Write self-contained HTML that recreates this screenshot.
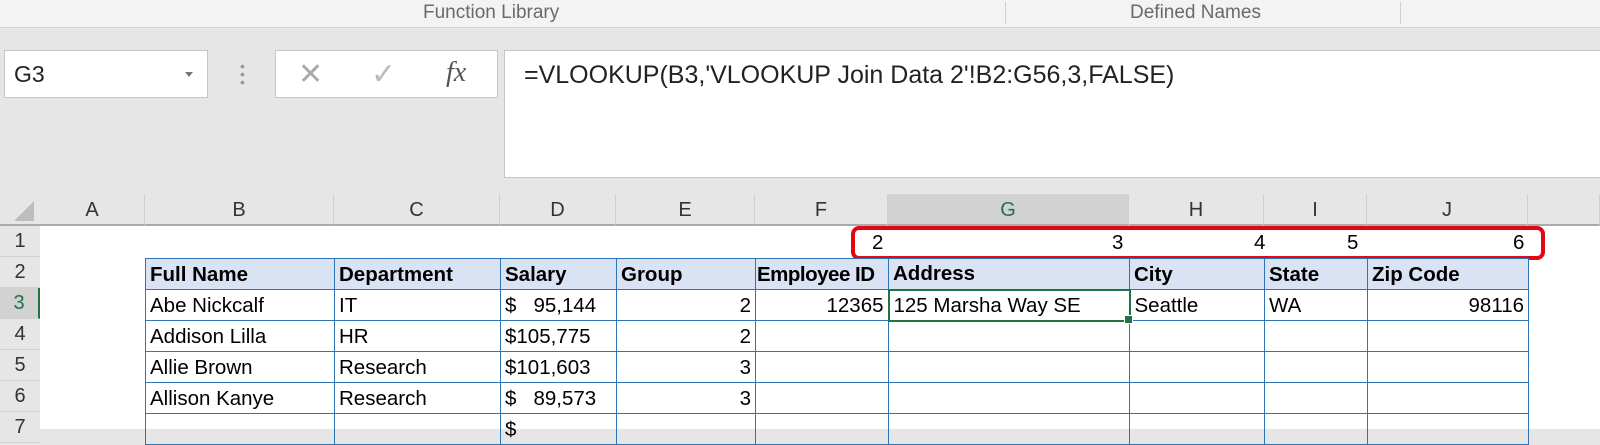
<!DOCTYPE html>
<html><head><style>
body{margin:0;width:1600px;height:429px;overflow:hidden;background:#e6e6e6;font-family:"Liberation Sans",sans-serif;position:relative}
.a{position:absolute}
.rib{left:0;top:0;width:1600px;height:27px;background:#f3f3f3;border-bottom:1px solid #d4d4d4;color:#6a6a6a;font-size:19px}
.box{background:#fff;border:1px solid #c6c6c6}
.hdr{top:194px;height:32px;background:#e6e6e6;border-bottom:2px solid #ababab;font-size:20px;color:#333;text-align:center;line-height:32px;border-right:1px solid #cfcfcf;box-sizing:border-box}
.rh{left:0;width:40px;height:31px;font-size:20px;color:#333;text-align:center;line-height:31px;background:#e6e6e6;border-bottom:1px solid #cfcfcf;box-sizing:border-box}
.grid{left:40px;top:226px;width:1560px;height:203px;background:#fff}
table{position:absolute;left:145px;top:258px;border-collapse:collapse;table-layout:fixed;font-size:20.5px;color:#000}
tr{height:31px}
td{border:1.5px solid #2e75b6;height:31px;padding:0 4px;white-space:nowrap;overflow:hidden;line-height:29px;box-sizing:border-box}
tr.h td{background:#dae3f3;font-weight:bold}
.r{text-align:right}
</style></head><body>
<div class="a rib"><span class="a" style="left:423px;top:2px">Function Library</span><span class="a" style="left:1005px;top:2px;height:22px;border-left:1px solid #d0d0d0"></span><span class="a" style="left:1130px;top:2px">Defined Names</span><span class="a" style="left:1400px;top:2px;height:22px;border-left:1px solid #d0d0d0"></span></div>
<div class="a box" style="left:4px;top:50px;width:202px;height:46px"><span class="a" style="left:9px;top:10px;font-size:23px;color:#222">G3</span><span class="a" style="left:180px;top:21px;width:0;height:0;border-left:4px solid transparent;border-right:4px solid transparent;border-top:5px solid #777"></span></div>
<div class="a" style="left:240px;top:62px;width:4px;color:#999;font-size:14px;line-height:8px">•<br>•<br>•</div>
<div class="a box" style="left:275px;top:50px;width:221px;height:46px;color:#aaa">
<span class="a" style="left:22px;top:6px;font-size:30px">✕</span><span class="a" style="left:95px;top:6px;font-size:30px;color:#bbb">✓</span><span class="a" style="left:170px;top:6px;font-size:28px;font-style:italic;font-family:'Liberation Serif',serif;color:#555">fx</span></div>
<div class="a box" style="left:504px;top:50px;width:1110px;height:126px"><span class="a" style="left:19px;top:10px;font-size:25px;color:#222">=VLOOKUP(B3,'VLOOKUP Join Data 2'!B2:G56,3,FALSE)</span></div>
<div class="a" style="left:0;top:194px;width:40px;height:32px;background:#e6e6e6;border-bottom:2px solid #ababab;box-sizing:border-box"><div class="a" style="left:14px;top:7px;width:0;height:0;border-left:20px solid transparent;border-bottom:20px solid #bdbdbd"></div></div>
<div class="a hdr" style="left:40px;width:105px">A</div>
<div class="a hdr" style="left:145px;width:189px">B</div>
<div class="a hdr" style="left:334px;width:166px">C</div>
<div class="a hdr" style="left:500px;width:116px">D</div>
<div class="a hdr" style="left:616px;width:139px">E</div>
<div class="a hdr" style="left:755px;width:133px">F</div>
<div class="a hdr" style="left:888px;width:241px;background:#d2d2d2;color:#217346">G</div>
<div class="a hdr" style="left:1129px;width:135px">H</div>
<div class="a hdr" style="left:1264px;width:103px">I</div>
<div class="a hdr" style="left:1367px;width:161px">J</div>
<div class="a hdr" style="left:1528px;width:72px"></div>
<div class="a rh" style="top:226px">1</div><div class="a rh" style="top:257px">2</div><div class="a rh" style="top:288px;background:#d2d2d2;color:#217346;border-right:2px solid #217346">3</div><div class="a rh" style="top:319px">4</div><div class="a rh" style="top:350px">5</div><div class="a rh" style="top:381px">6</div><div class="a rh" style="top:412px">7</div>
<div class="a grid"></div>
<div class="a" style="left:851px;top:226px;width:686px;height:26px;border:4px solid #e30613;border-radius:8px;font-size:20.5px;line-height:26px">
<span class="a" style="left:17px">2</span><span class="a" style="left:257px">3</span><span class="a" style="left:399px">4</span><span class="a" style="left:492px">5</span><span class="a" style="left:658px">6</span></div>
<table>
<colgroup><col style="width:189px"><col style="width:166px"><col style="width:116px"><col style="width:139px"><col style="width:133px"><col style="width:241px"><col style="width:135px"><col style="width:103px"><col style="width:161px"></colgroup>
<tr class="h"><td>Full Name</td><td>Department</td><td>Salary</td><td>Group</td><td style="padding:0 1px;letter-spacing:-0.5px">Employee ID</td><td>Address</td><td>City</td><td>State</td><td>Zip Code</td></tr>
<tr><td>Abe Nickcalf</td><td>IT</td><td>$&nbsp;&nbsp;&nbsp;95,144</td><td class="r">2</td><td class="r">12365</td><td style="border:2px solid #217346">125 Marsha Way SE</td><td>Seattle</td><td>WA</td><td class="r">98116</td></tr>
<tr><td>Addison Lilla</td><td>HR</td><td>$105,775</td><td class="r">2</td><td></td><td></td><td></td><td></td><td></td></tr>
<tr><td>Allie Brown</td><td>Research</td><td>$101,603</td><td class="r">3</td><td></td><td></td><td></td><td></td><td></td></tr>
<tr><td>Allison Kanye</td><td>Research</td><td>$&nbsp;&nbsp;&nbsp;89,573</td><td class="r">3</td><td></td><td></td><td></td><td></td><td></td></tr>
<tr><td></td><td></td><td>$</td><td></td><td></td><td></td><td></td><td></td><td></td></tr>
</table>
<div class="a" style="left:1124px;top:315px;width:7px;height:7px;background:#217346;border:1px solid #fff"></div>
</body></html>
